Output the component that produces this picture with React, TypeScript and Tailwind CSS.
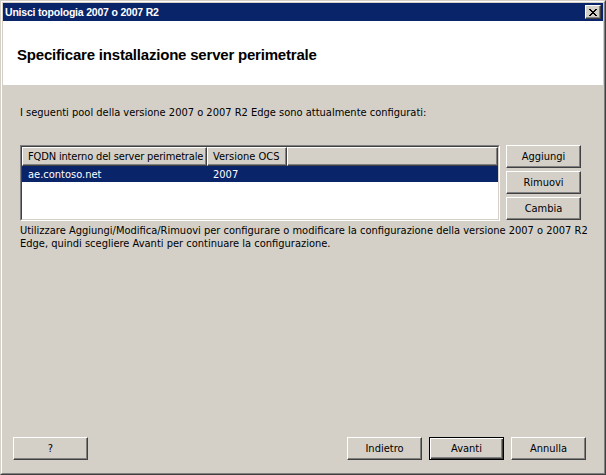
import React from "react";

const raised =
  "border border-t-white border-l-white border-r-[#404040] border-b-[#404040] shadow-[inset_-1px_-1px_#808080] bg-[#d4d0c8]";

const Btn: React.FC<{ label: string; isDefault?: boolean; className?: string }> = ({
  label,
  isDefault,
  className,
}) => {
  if (isDefault) {
    return (
      <div
        className={`flex h-[23px] w-[75px] items-center justify-center border border-black bg-[#d4d0c8] shadow-[inset_1px_1px_#fff,inset_-1px_-1px_#404040,inset_-2px_-2px_#808080] ${className ?? ""}`}
      >
        {label}
      </div>
    );
  }
  return (
    <div className={`flex h-[23px] w-[75px] items-center justify-center ${raised} ${className ?? ""}`}>
      {label}
    </div>
  );
};

const App: React.FC = () => {
  const font = "font-['DejaVu_Sans_Condensed','Liberation_Sans',sans-serif]";

  return (
    <div
      className={`h-[475px] w-[606px] overflow-hidden bg-[#d4d0c8] text-[11px] leading-[13px] text-black ${font}`}
    >
      {/* window frame */}
      <div className="h-full border border-t-[#d4d0c8] border-l-[#d4d0c8] border-r-[#404040] border-b-[#404040]">
        <div className="flex h-full flex-col border border-t-white border-l-white border-r-[#808080] border-b-[#808080] p-px">
          {/* title bar */}
          <div className="flex h-[18px] items-center justify-between bg-[#0a246a] pl-[2px] pr-[2px]">
            <span className="font-['Liberation_Sans',sans-serif] text-[10.5px] font-bold tracking-[-0.2px] text-white">
              Unisci topologia 2007 o 2007 R2
            </span>
            <div className={`flex h-[14px] w-[16px] items-center justify-center ${raised}`}>
              <svg width="8" height="7" viewBox="0 0 8 7">
                <path d="M0 0 L7 7 M1 0 L8 7 M7 0 L0 7 M8 0 L1 7" stroke="#000" strokeWidth="1" />
              </svg>
            </div>
          </div>

          {/* header */}
          <div className="flex h-[64px] items-center bg-white pl-[14px]">
            <h1 className="mt-[3px] font-['Liberation_Sans',sans-serif] text-[15px] font-bold tracking-[-0.2px]">
              Specificare installazione server perimetrale
            </h1>
          </div>

          {/* body */}
          <div className="flex flex-1 flex-col px-[17px]">
            <p className="mt-[21px]">
              I seguenti pool della versione 2007 o 2007 R2 Edge sono attualmente configurati:
            </p>

            <div className="mt-[26px] flex gap-[6px]">
              <div className="h-[76px] w-[480px] border border-t-[#808080] border-l-[#808080] border-r-white border-b-white">
                <div className="h-full border border-t-[#404040] border-l-[#404040] border-r-[#d4d0c8] border-b-[#d4d0c8] bg-white">
                  <div className="flex h-[19px] whitespace-nowrap">
                    <div className={`flex w-[185px] items-center overflow-hidden pl-[5px] tracking-[-0.15px] ${raised}`}>
                      FQDN interno del server perimetrale
                    </div>
                    <div className={`flex w-[80px] items-center pl-[5px] ${raised}`}>Versione OCS</div>
                    <div className={`flex-1 ${raised}`} />
                  </div>
                  <div className="flex h-[16px] items-center bg-[#0a246a] text-white">
                    <span className="w-[185px] pl-[6px]">ae.contoso.net</span>
                    <span className="pl-[6px]">2007</span>
                  </div>
                </div>
              </div>

              <div className="flex flex-col gap-[3px]">
                <Btn label="Aggiungi" />
                <Btn label="Rimuovi" />
                <Btn label="Cambia" />
              </div>
            </div>

            <p className="mt-[3px] w-[570px]">
              Utilizzare Aggiungi/Modifica/Rimuovi per configurare o modificare la configurazione della versione 2007 o
              2007 R2 Edge, quindi scegliere Avanti per continuare la configurazione.
            </p>

            <div className="flex-1" />

            <div className="mb-[12px] flex items-center">
              <Btn label="?" className="-ml-[7px]" />
              <div className="flex-1" />
              <div className="flex gap-[7px]">
                <Btn label="Indietro" />
                <Btn label="Avanti" isDefault />
                <Btn label="Annulla" />
              </div>
            </div>
          </div>
        </div>
      </div>
    </div>
  );
};

export default App;
